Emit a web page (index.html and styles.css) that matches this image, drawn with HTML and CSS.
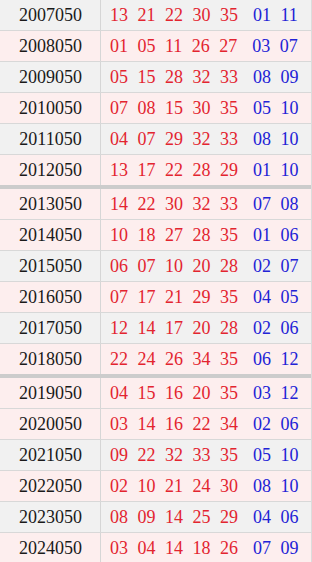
FILE: index.html
```html
<!DOCTYPE html>
<html>
<head>
<meta charset="utf-8">
<link rel="stylesheet" href="styles.css">
</head>
<body>
<div class="table">
  <div class="row grey"><div class="year">2007050</div><div class="nums"><span class="r">13</span><span class="r">21</span><span class="r">22</span><span class="r">30</span><span class="r">35</span><span class="b first">01</span><span class="b">11</span></div></div>
  <div class="row pink"><div class="year">2008050</div><div class="nums"><span class="r">01</span><span class="r">05</span><span class="r">11</span><span class="r">26</span><span class="r">27</span><span class="b first">03</span><span class="b">07</span></div></div>
  <div class="row grey"><div class="year">2009050</div><div class="nums"><span class="r">05</span><span class="r">15</span><span class="r">28</span><span class="r">32</span><span class="r">33</span><span class="b first">08</span><span class="b">09</span></div></div>
  <div class="row pink"><div class="year">2010050</div><div class="nums"><span class="r">07</span><span class="r">08</span><span class="r">15</span><span class="r">30</span><span class="r">35</span><span class="b first">05</span><span class="b">10</span></div></div>
  <div class="row grey"><div class="year">2011050</div><div class="nums"><span class="r">04</span><span class="r">07</span><span class="r">29</span><span class="r">32</span><span class="r">33</span><span class="b first">08</span><span class="b">10</span></div></div>
  <div class="row pink sep"><div class="year">2012050</div><div class="nums"><span class="r">13</span><span class="r">17</span><span class="r">22</span><span class="r">28</span><span class="r">29</span><span class="b first">01</span><span class="b">10</span></div></div>

  <div class="row pink"><div class="year">2013050</div><div class="nums"><span class="r">14</span><span class="r">22</span><span class="r">30</span><span class="r">32</span><span class="r">33</span><span class="b first">07</span><span class="b">08</span></div></div>
  <div class="row pink"><div class="year">2014050</div><div class="nums"><span class="r">10</span><span class="r">18</span><span class="r">27</span><span class="r">28</span><span class="r">35</span><span class="b first">01</span><span class="b">06</span></div></div>
  <div class="row grey"><div class="year">2015050</div><div class="nums"><span class="r">06</span><span class="r">07</span><span class="r">10</span><span class="r">20</span><span class="r">28</span><span class="b first">02</span><span class="b">07</span></div></div>
  <div class="row pink"><div class="year">2016050</div><div class="nums"><span class="r">07</span><span class="r">17</span><span class="r">21</span><span class="r">29</span><span class="r">35</span><span class="b first">04</span><span class="b">05</span></div></div>
  <div class="row grey"><div class="year">2017050</div><div class="nums"><span class="r">12</span><span class="r">14</span><span class="r">17</span><span class="r">20</span><span class="r">28</span><span class="b first">02</span><span class="b">06</span></div></div>
  <div class="row pink sep"><div class="year">2018050</div><div class="nums"><span class="r">22</span><span class="r">24</span><span class="r">26</span><span class="r">34</span><span class="r">35</span><span class="b first">06</span><span class="b">12</span></div></div>

  <div class="row pink"><div class="year">2019050</div><div class="nums"><span class="r">04</span><span class="r">15</span><span class="r">16</span><span class="r">20</span><span class="r">35</span><span class="b first">03</span><span class="b">12</span></div></div>
  <div class="row pink"><div class="year">2020050</div><div class="nums"><span class="r">03</span><span class="r">14</span><span class="r">16</span><span class="r">22</span><span class="r">34</span><span class="b first">02</span><span class="b">06</span></div></div>
  <div class="row grey"><div class="year">2021050</div><div class="nums"><span class="r">09</span><span class="r">22</span><span class="r">32</span><span class="r">33</span><span class="r">35</span><span class="b first">05</span><span class="b">10</span></div></div>
  <div class="row pink"><div class="year">2022050</div><div class="nums"><span class="r">02</span><span class="r">10</span><span class="r">21</span><span class="r">24</span><span class="r">30</span><span class="b first">08</span><span class="b">10</span></div></div>
  <div class="row grey"><div class="year">2023050</div><div class="nums"><span class="r">08</span><span class="r">09</span><span class="r">14</span><span class="r">25</span><span class="r">29</span><span class="b first">04</span><span class="b">06</span></div></div>
  <div class="row pink"><div class="year">2024050</div><div class="nums"><span class="r">03</span><span class="r">04</span><span class="r">14</span><span class="r">18</span><span class="r">26</span><span class="b first">07</span><span class="b">09</span></div></div>
</div>
</body>
</html>
```

FILE: styles.css
```css
html, body {
  margin: 0;
  padding: 0;
  background: #ffffff;
}

.table {
  width: 311px;
  border-right: 1px solid #dcdcdc;
  font-family: "Liberation Serif", "Noto Serif", serif;
  font-size: 18px;
}

.row {
  display: flex;
  height: 30px;
  border-bottom: 1px solid #d8d8d8;
}

.row.sep {
  border-bottom: 4px solid #cccccc;
}

.grey {
  background: #f1f1f1;
}

.pink {
  background: #fdeeee;
}

.year {
  width: 101px;
  border-right: 1px solid #d6d6d6;
  display: flex;
  align-items: center;
  justify-content: center;
  color: #1a1a1a;
  padding-left: 1px;
  box-sizing: border-box;
}

.nums {
  flex: 1;
  display: flex;
  align-items: center;
  gap: 9.5px;
  padding-left: 9px;
}

.r {
  color: #e3242f;
}

.b {
  color: #2222d6;
}

.b.first {
  margin-left: 5.5px;
}
```
